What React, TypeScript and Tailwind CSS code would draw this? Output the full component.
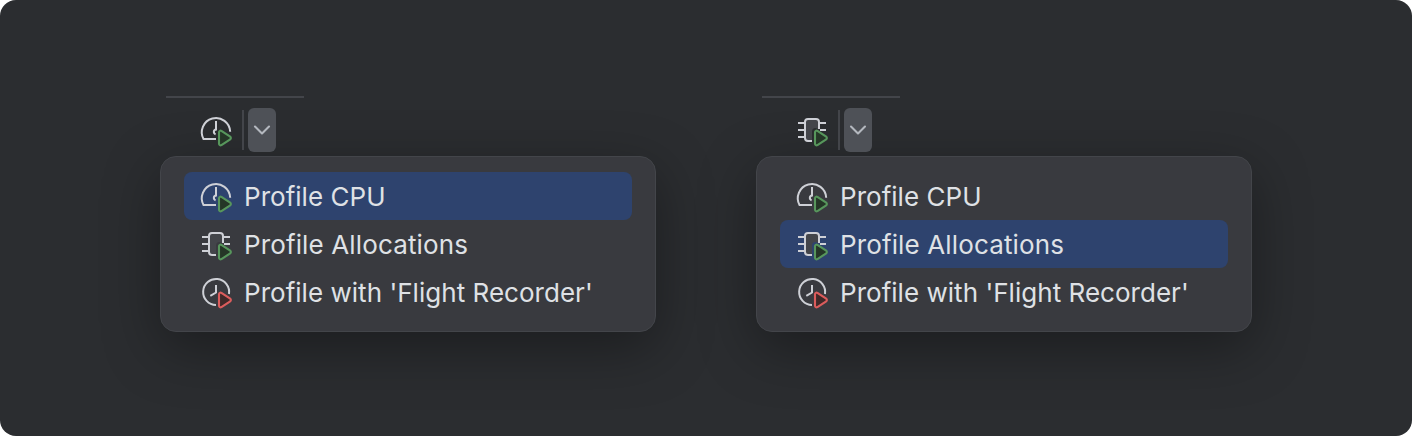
import React from "react";

type Kind = "cpu" | "alloc" | "flight";

function Play({ red = false }: { red?: boolean }) {
  return (
    <path
      d="M19 18.2C19 17 20.3 16.2 21.4 16.8L30.2 22.6C31.1 23.2 31.1 24.8 30.2 25.4L21.4 31.1C20.3 31.7 19 31 19 29.8Z"
      fill={red ? "#402929" : "#253627"}
      stroke={red ? "#DB5C5C" : "#57965C"}
      strokeWidth="2.1"
      strokeLinejoin="round"
    />
  );
}

function ProfileIcon({ kind }: { kind: Kind }) {
  return (
    <svg viewBox="0 0 32 32" className="size-8 shrink-0 overflow-visible" fill="none" stroke="#CED0D6" strokeWidth="2">
      {kind === "cpu" && (
        <>
          <path d="M16 25H3.5A14.2 14.2 0 1 1 30.2 17.8" strokeLinejoin="round" />
          <path d="M16 7V15.5A2.4 2.4 0 0 0 15.6 20.2" />
        </>
      )}
      {kind === "alloc" && (
        <>
          <path d="M9 8A3 3 0 0 1 12 5H20A3 3 0 0 1 23 8V15.5L20.5 14.2Q16 13.5 16 18V27H12A3 3 0 0 1 9 24Z" fill="#43454A" stroke="none" />
          <path d="M16 27H12A3 3 0 0 1 9 24V8A3 3 0 0 1 12 5H20A3 3 0 0 1 23 8V15M2 9H8M2 16H8M2 23H8M24 9H30M24 16H30" />
        </>
      )}
      {kind === "flight" && (
        <>
          <path d="M16 29A13 13 0 1 1 29 18" />
          <path d="M16 9V16.5L10.3 19.8" />
        </>
      )}
      <Play red={kind === "flight"} />
    </svg>
  );
}

const items: { kind: Kind; label: string; spacing: string }[] = [
  { kind: "cpu", label: "Profile CPU", spacing: "tracking-[0.03px]" },
  { kind: "alloc", label: "Profile Allocations", spacing: "tracking-[0.13px]" },
  { kind: "flight", label: "Profile with 'Flight Recorder'", spacing: "tracking-[0.03px]" },
];

function ProfilerMenu({ selected }: { selected: Kind }) {
  return (
    <section className="w-[496px]">
      <div className="ml-1.5 h-0.5 w-[138px] bg-[#43454A]" />
      <div className="mt-2.5 flex h-11 items-center pl-10">
        <ProfileIcon kind={selected} />
        <div className="ml-2.5 h-10 w-0.5 bg-[#43454A]" />
        <button aria-label="Choose profiler" className="ml-1 flex h-11 w-7 items-center justify-center rounded-md bg-[#4E5157]">
          <svg viewBox="0 0 28 44" className="h-11 w-7" fill="none" stroke="#B4B8BF" strokeWidth="2.1" strokeLinecap="round">
            <path d="M7 18.5L14 25.5L21 18.5" strokeLinejoin="round" />
          </svg>
        </button>
      </div>
      <div className="mt-1 h-44 rounded-2xl border border-[#43454A] bg-[#393A3F] px-[23px] pt-[15px] shadow-[0_16px_56px_rgba(0,0,0,0.36)]">
        {items.map(({ kind, label, spacing }) => (
          <div key={kind} className={`flex h-12 items-center gap-3 rounded-lg pl-4 ${kind === selected ? "bg-[#2E436E]" : ""}`}>
            <ProfileIcon kind={kind} />
            <span className={`whitespace-nowrap pt-0.5 text-[26px] leading-8 font-[430] text-[#DFE1E5] ${spacing}`}>{label}</span>
          </div>
        ))}
      </div>
    </section>
  );
}

export default function App() {
  return (
    <main className="flex h-[436px] w-[1412px] gap-[100px] overflow-hidden rounded-2xl bg-[#2B2D30] pl-40 pt-24 font-['Inter',sans-serif]">
      <ProfilerMenu selected="cpu" />
      <ProfilerMenu selected="alloc" />
    </main>
  );
}
